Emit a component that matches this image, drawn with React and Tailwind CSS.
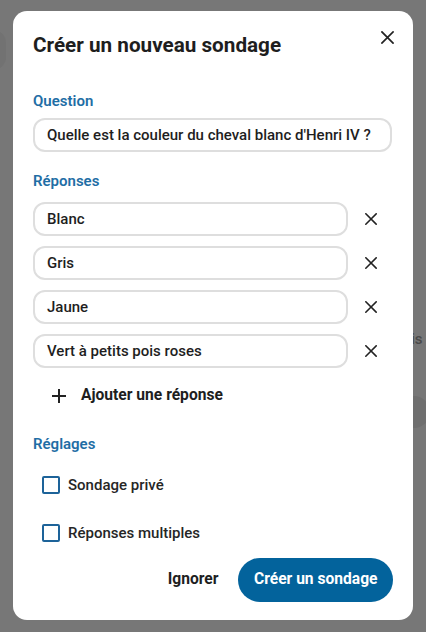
import React, { useState } from "react";

const XIcon = ({ size = 14 }) => (
  <svg width={size} height={size} viewBox="0 0 14 14" fill="none">
    <path d="M1 1L13 13M13 1L1 13" stroke="#222" strokeWidth="1.8" strokeLinecap="square" />
  </svg>
);

const PlusIcon = () => (
  <svg width="14" height="14" viewBox="0 0 14 14" fill="none">
    <path d="M7 0V14M0 7H14" stroke="#222" strokeWidth="2" />
  </svg>
);

const ANSWERS = ["Blanc", "Gris", "Jaune", "Vert à petits pois roses"];

const Label = ({ children, className = "" }) => (
  <p className={`text-[15px] leading-5 font-semibold text-[#1f6ea5] ${className}`}>
    {children}
  </p>
);

const Field = ({ value, className = "" }) => (
  <div
    className={`h-[34px] flex items-center rounded-[12px] border-2 border-[#dedede] px-3 text-[15px] font-medium text-[#1e1e1e] ${className}`}
  >
    {value}
  </div>
);

const Check = ({ label, checked, onClick }) => (
  <button onClick={onClick} className="flex items-center gap-[8px] h-[48px] pl-[9px] text-left">
    <span
      className={`w-[18px] h-[18px] rounded-[2px] border-2 border-[#1d6399] ${checked ? "bg-[#1d6399]" : ""}`}
    />
    <span className="text-[15px] font-medium text-[#262626]">{label}</span>
  </button>
);

export default function App() {
  const [priv, setPriv] = useState(false);
  const [multi, setMulti] = useState(false);

  return (
    <div
      className="relative min-h-screen h-[632px] overflow-hidden bg-[#777777] pl-[13px] pt-[11px]"
      style={{ fontFamily: "Roboto, 'Noto Sans', sans-serif" }}
    >
      {/* faint page content behind the overlay */}
      <span className="absolute left-[411px] top-[328px] text-[15px] font-medium text-[#4a4a4a]">is</span>
      <span className="absolute left-[398px] top-[396px] w-[32px] h-[32px] rounded-full bg-[#6f6f6f]" />
      <span className="absolute -left-[20px] top-[30px] w-[26px] h-[40px] rounded-full bg-[#727272]" />

      <div className="relative w-[400px] h-[609px] bg-white rounded-[14px] px-[20px] pt-[20px]">
        <div className="flex items-start justify-between">
          <h1 className="text-[20.7px] leading-7 font-bold text-[#1e1e1e]">Créer un nouveau sondage</h1>
          <button className="mt-[0px] mr-[-1px]">
            <XIcon size={13} />
          </button>
        </div>

        <Label className="mt-[32px]">Question</Label>
        <Field
          className="mt-[7px] w-[359px]"
          value="Quelle est la couleur du cheval blanc d'Henri IV ?"
        />

        <Label className="mt-[19px]">Réponses</Label>
        <div className="mt-[11px] flex flex-col gap-[10px]">
          {ANSWERS.map((a) => (
            <div key={a} className="flex items-center">
              <Field className="w-[315px]" value={a} />
              <button className="ml-[17px]">
                <XIcon size={12} />
              </button>
            </div>
          ))}
        </div>

        <button className="mt-[8px] h-[40px] flex items-center pl-[19px] gap-[15px]">
          <PlusIcon />
          <span className="text-[15.6px] font-bold text-[#1e1e1e]">Ajouter une réponse</span>
        </button>

        <Label className="mt-[18px]">Réglages</Label>
        <div className="mt-[7px] flex flex-col">
          <Check label="Sondage privé" checked={priv} onClick={() => setPriv(!priv)} />
          <Check label="Réponses multiples" checked={multi} onClick={() => setMulti(!multi)} />
        </div>

        <div className="mt-[1px] flex items-center justify-end gap-[20px]">
          <button className="text-[15.6px] font-bold text-[#1e1e1e]">Ignorer</button>
          <button className="h-[44px] px-[15.5px] rounded-full bg-[#03639c] text-[15.6px] font-bold text-white">
            Créer un sondage
          </button>
        </div>
      </div>
    </div>
  );
}
